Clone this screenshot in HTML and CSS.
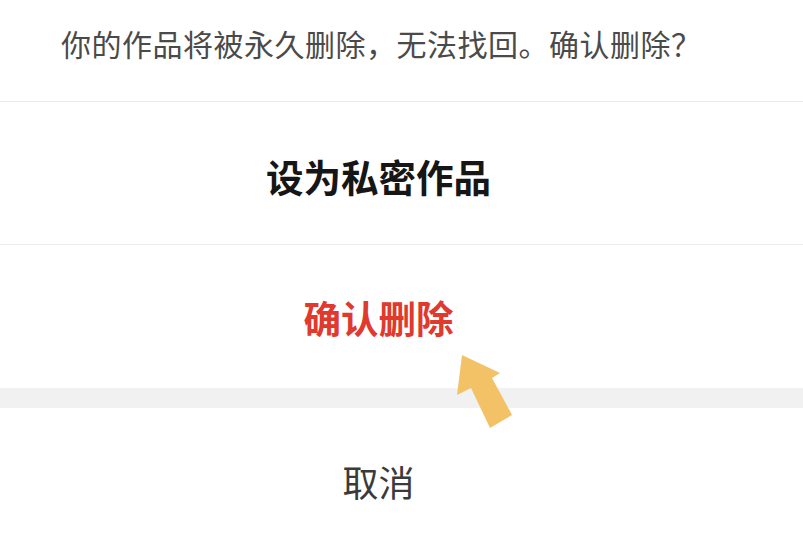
FILE: index.html
```html
<!DOCTYPE html>
<html lang="zh-CN">
<head>
<meta charset="utf-8">
<title>删除作品</title>
<link rel="stylesheet" href="styles.css">
</head>
<body>
<div class="sheet">
  <div class="msg">你的作品将被永久删除，无法找回。确认删除？</div>
  <div class="action action-private">设为私密作品</div>
  <div class="action action-delete">确认删除</div>
  <div class="gap"></div>
  <div class="action action-cancel">取消</div>
  <svg class="pointer" width="803" height="535" viewBox="0 0 803 535">
    <polygon points="462,355 500,373 492,378 512,415 490,428 471,388 457,395" fill="#f3c266"/>
  </svg>
</div>
</body>
</html>
```
FILE: styles.css
```css
html, body {
  margin: 0;
  padding: 0;
  background: #ffffff;
}
.sheet {
  position: relative;
  width: 803px;
  height: 535px;
  overflow: hidden;
  font-family: "Noto Sans CJK SC", "Noto Sans", sans-serif;
}
.msg {
  box-sizing: border-box;
  height: 102px;
  padding: 28px 0 0 61px;
  font-size: 30px;
  line-height: 30px;
  letter-spacing: 0.5px;
  color: #4a4a4a;
  border-bottom: 1px solid #ebebeb;
  white-space: nowrap;
}
.action {
  box-sizing: border-box;
  display: flex;
  align-items: center;
  justify-content: center;
  height: 143px;
  padding-right: 46px;
  font-size: 37.5px;
}
.action-private {
  padding-top: 4px;
  font-weight: 700;
  color: #161616;
  border-bottom: 1px solid #ebebeb;
}
.action-delete {
  padding-top: 0;
  font-weight: 700;
  color: #e0392e;
}
.gap {
  height: 20px;
  background: #f1f1f1;
}
.action-cancel {
  height: 148px;
  padding-bottom: 2px;
  font-size: 36px;
  color: #3a3a3a;
}
.pointer {
  position: absolute;
  left: 0;
  top: 0;
  pointer-events: none;
}
```
